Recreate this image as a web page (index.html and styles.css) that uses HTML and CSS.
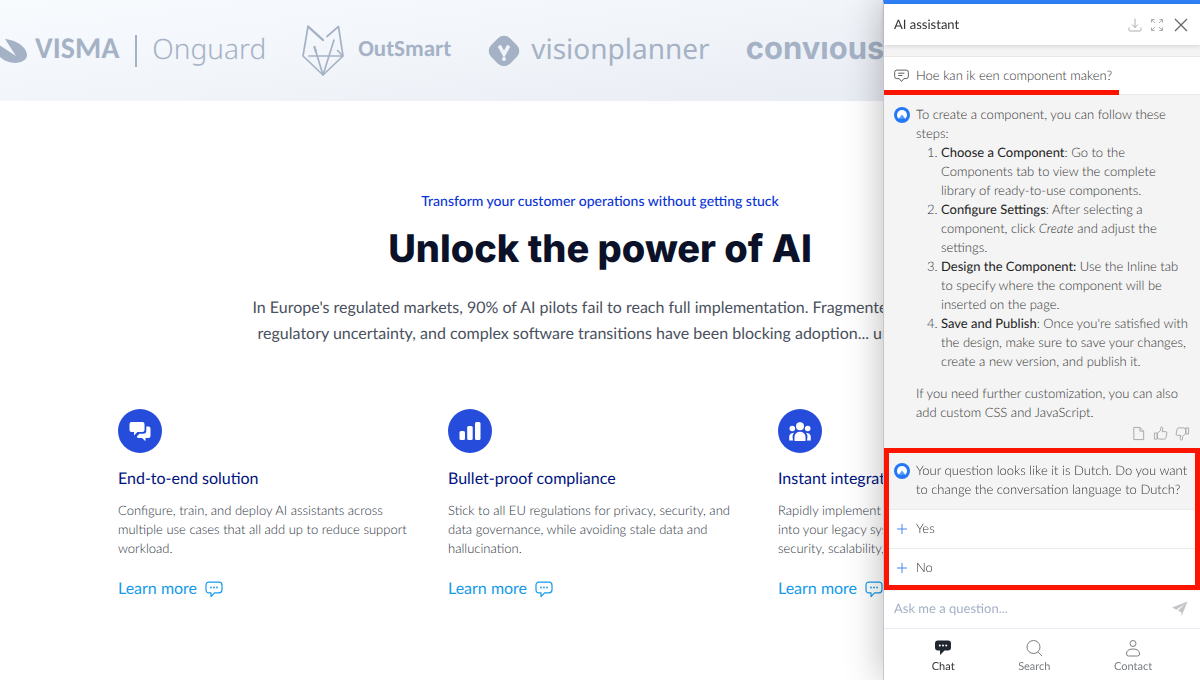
FILE: index.html
```html
<!DOCTYPE html>
<html lang="en">
<head>
<meta charset="utf-8">
<meta name="viewport" content="width=device-width, initial-scale=1">
<title>Unlock the power of AI</title>
<link rel="stylesheet" href="styles.css">
</head>
<body>
<svg class="sprite" aria-hidden="true">
  <symbol id="bubble" viewBox="0 0 18 17">
    <path d="M4 1.200h10q3 0 3 3v4.600q0 3-3 3H9.500L6 15.600v-3.800H4q-3 0-3-3V4.200q0-3 3-3z" fill="none" stroke="currentColor" stroke-width="1.200" stroke-linejoin="round"/>
    <g fill="currentColor"><circle cx="6" cy="6.500" r=".9"/><circle cx="9" cy="6.500" r=".9"/><circle cx="12" cy="6.500" r=".9"/></g>
  </symbol>
  <symbol id="avatar" viewBox="0 0 16 16">
    <circle cx="8" cy="8" r="8" fill="#2478f5"/>
    <circle cx="8" cy="8" r="5" fill="#fff"/>
    <path d="M8 7.500 12 12.500A6 6 0 0 1 4 12.500z" fill="#5b9cf8"/>
    <path d="M3.600 11.800Q5 11 6 11.800t2 0 2 0 2.400 0L11 14.500H5z" fill="#2478f5"/>
  </symbol>
</svg>

<header class="logos">
  <div class="logo logo-visma" role="img" aria-label="Visma Onguard">
    <svg class="swoosh" viewBox="0 0 27 26"><path d="M0 7.500 16 18 5 1C16 2 27 9 27 17c0 6-8 9-16 7.500Q4 23 0 19z" fill="currentColor"/></svg>
    <span class="visma-text">VISMA</span>
    <span class="divider"></span>
    <span class="onguard-text">Onguard</span>
  </div>
  <div class="logo logo-outsmart">
    <svg class="fox" viewBox="0 0 42 52" fill="none" stroke="currentColor" stroke-width="1.700" stroke-linecap="round" stroke-linejoin="round">
      <path d="M21 15 6 1.500 1 31l20 19 20-19L36.500 1.500 25 11.500M7 31h34"/><path d="M12.500 22 21 50 32 15"/><path d="M35.500 25.500 40 30"/><path d="M21 15 6 1.500M12.500 22l1.500 5" stroke-width="2.200"/>
    </svg>
    <span class="outsmart-text">OutSmart</span>
  </div>
  <div class="logo logo-vision">
    <svg class="vp" viewBox="0 0 32 32"><rect x="3.500" y="3.500" width="25" height="25" rx="8" transform="rotate(45 16 16)" fill="currentColor"/><path d="m11.500 11 4.500 8 4.500-8M16 18v1" stroke="#f0f3f9" stroke-width="3.400" fill="none"/><circle cx="16" cy="23.500" r="1.800" fill="#f0f3f9"/></svg>
    <span class="vision-text">visionplanner</span>
  </div>
  <div class="logo"><span class="convious-text" role="img" aria-label="convious">convıous</span></div>
</header>

<main class="page">
  <section class="intro">
    <p class="eyebrow">Transform your customer operations without getting stuck</p>
    <h1>Unlock the power of AI</h1>
    <p class="lead">In Europe's regulated markets, 90% of AI pilots fail to reach full implementation. Fragmented stacks,<br>regulatory uncertainty, and complex software transitions have been blocking adoption... until now.</p>
  </section>
  <section class="features">
    <article class="feature">
      <span class="badge"><svg viewBox="0 0 44 44"><path d="M13.500 13h11q2 0 2 2v6q0 2-2 2h-5l-3.500 3.500V23h-2.500q-2 0-2-2v-6q0-2 2-2z" fill="#fff"/><path d="M28.300 17.500h2.200q2 0 2 2v7.500q0 2-2 2h-3v3.200L24 29h-3.500q-1.500 0-1.700-1.500l2.500-2.700h4q3 0 3-3z" fill="#fff"/></svg></span>
      <h2>End-to-end solution</h2>
      <p>Configure, train, and deploy AI assistants across multiple use cases that all add up to reduce support workload.</p>
      <a class="more" href="#">Learn more <svg><use href="#bubble"/></svg></a>
    </article>
    <article class="feature">
      <span class="badge"><svg viewBox="0 0 44 44" fill="#fff"><rect x="11.500" y="22" width="5.500" height="9" rx="1.500"/><rect x="19.200" y="17" width="5.500" height="14" rx="1.500"/><rect x="27" y="13" width="5.500" height="18" rx="1.500"/></svg></span>
      <h2>Bullet-proof compliance</h2>
      <p>Stick to all EU regulations for privacy, security, and data governance, while avoiding stale data and hallucination.</p>
      <a class="more" href="#">Learn more <svg><use href="#bubble"/></svg></a>
    </article>
    <article class="feature">
      <span class="badge"><svg viewBox="0 0 44 44" fill="#fff"><circle cx="22" cy="17.200" r="4"/><circle cx="14.300" cy="19.500" r="2.800"/><circle cx="29.700" cy="19.500" r="2.800"/><path d="M16.500 32v-4.500a5.500 4.700 0 0 1 11 0V32zM15 31.500h-3.800V28q0-3.800 4.800-4.200-1.500 1.700-1.500 4zM29 31.500h3.800V28q0-3.800-4.800-4.200 1.500 1.700 1.500 4z"/></svg></span>
      <h2>Instant integrations</h2>
      <p>Rapidly implement AI assistants<br>into your legacy systems with<br>security, scalability, and control.</p>
      <a class="more" href="#">Learn more <svg><use href="#bubble"/></svg></a>
    </article>
  </section>
</main>

<aside class="assistant" aria-label="AI assistant">
  <div class="assistant-head">
    <span class="assistant-title">AI assistant</span>
    <button type="button" aria-label="Download"><svg class="i14" viewBox="0 0 14 14"><path d="M7 .5v9M4 6.500l3 3 3-3M1 9.500V12q0 1 1 1h10q1 0 1-1V9.500"/></svg></button>
    <button type="button" aria-label="Expand"><svg class="i14" viewBox="0 0 14 14"><path d="M1.500 4.500v-3h3M1.500 1.500 5 5M9.500 1.500h3v3M12.500 1.500 9 5M1.500 9.500v3h3M1.500 12.500 5 9M9.500 12.500h3v-3M12.500 12.500 9 9"/></svg></button>
    <button type="button" class="close" aria-label="Close"><svg class="i14" viewBox="0 0 14 14"><path d="m1 1 12 12M13 1 1 13"/></svg></button>
  </div>
  <div class="conversation">
    <div class="question">
      <svg class="q-icon" viewBox="0 0 16 14"><path d="M3 .7h10q2.300 0 2.300 2.300v4.500q0 2.300-2.300 2.300h-2.500L8 12.800 5.500 9.800H3Q.7 9.800.7 7.500V3Q.7.7 3 .7zM4.500 4h6.500M4.500 6.500h4.500"/></svg>
      <span>Hoe kan ik een component maken?</span>
      <span class="mark-line"></span>
    </div>
    <div class="message">
      <svg class="avatar"><use href="#avatar"/></svg>
      <div class="message-text">
        <p>To create a component, you can follow these steps:</p>
        <ol>
          <li><strong>Choose a Component</strong>: Go to the Components tab to view the complete library of ready-to-use components.</li>
          <li><strong>Configure Settings</strong>: After selecting a component, click <em>Create</em> and adjust the settings.</li>
          <li><strong>Design the Component:</strong> Use the Inline tab to specify where the component will be inserted on the page.</li>
          <li><strong>Save and Publish</strong>: Once you're satisfied with the design, make sure to save your changes, create a new version, and publish it.</li>
        </ol>
        <p class="after-list">If you need further customization, you can also add custom CSS and JavaScript.</p>
      </div>
    </div>
    <div class="feedback">
      <button type="button" aria-label="Copy"><svg viewBox="0 0 16 16"><path d="M3 1.500h6.500L13.500 5.500v9H3zM9.500 1.500v4h4"/></svg></button>
      <button type="button" aria-label="Helpful"><svg viewBox="0 0 16 16"><path d="M1.500 7.500h3v6.500h-3zM4.500 8 8 4.800V2.500Q8 1 9.200 1q1.300 0 1.300 2l-.7 3h3.700q1.500 0 1.300 1.500l-1 5q-.3 1.500-1.800 1.500H7L4.500 13z"/></svg></button>
      <button type="button" aria-label="Not helpful"><svg viewBox="0 0 16 16"><path d="M14.500 8.500h-3V2h3zM11.500 8 8 11.200v2.300Q8 15 6.800 15q-1.300 0-1.300-2l.7-3H2.500Q1 10 1.200 8.500l1-5Q2.500 2 4 2h5l2.500 1z"/></svg></button>
    </div>
    <div class="language">
      <div class="message">
        <svg class="avatar"><use href="#avatar"/></svg>
        <p class="message-text">Your question looks like it is Dutch. Do you want to change the conversation language to Dutch?</p>
      </div>
      <button type="button" class="option"><svg viewBox="0 0 12 12"><path d="M6 1v10M1 6h10"/></svg>Yes</button>
      <button type="button" class="option"><svg viewBox="0 0 12 12"><path d="M6 1v10M1 6h10"/></svg>No</button>
      <span class="mark-box"></span>
    </div>
  </div>
  <form class="ask">
    <input type="text" placeholder="Ask me a question..." aria-label="Ask me a question">
    <button type="button" aria-label="Send"><svg viewBox="0 0 16 16"><path d="M15.500.5 0 6.500l4.500 2.300 8-5.800L6 9.700l3.500 1.800V15.500z" fill="#c4c7ca"/></svg></button>
  </form>
  <nav class="tabs">
    <button type="button" class="tab active"><svg viewBox="0 0 18 18"><path d="M4 1.500h10q3 0 3 3v4q0 3-3 3h-3.500L6 16v-4.500H4q-3 0-3-3v-4q0-3 3-3z" fill="#20272e"/><g fill="#fff"><circle cx="5.800" cy="6.500" r="1"/><circle cx="9" cy="6.500" r="1"/><circle cx="12.200" cy="6.500" r="1"/></g></svg>Chat</button>
    <button type="button" class="tab"><svg viewBox="0 0 18 18"><circle cx="8.500" cy="8" r="6.500"/><path d="m13 13 4 4"/></svg>Search</button>
    <button type="button" class="tab"><svg viewBox="0 0 18 18"><circle cx="9" cy="4.500" r="3"/><path d="M4.500 17h9q2 0 2-2 0-5-6.500-5T2.500 15q0 2 2 2z"/></svg>Contact</button>
  </nav>
</aside>
</body>
</html>
```
FILE: styles.css
```css
* { box-sizing: border-box; }

body {
  margin: 0;
  min-height: 100vh;
  background: #fff;
  font-family: Lato, Carlito, sans-serif;
  text-rendering: geometricPrecision;
  color: #4a5160;
  overflow: hidden;
}

h1, h2, p, ol { margin: 0; }

button {
  border: 0;
  padding: 0;
  background: none;
  font: inherit;
  color: inherit;
  text-rendering: inherit;
  cursor: pointer;
}

svg { display: block; flex: none; }

.sprite { position: absolute; width: 0; height: 0; }

/* Customer logos */
.logos {
  display: flex;
  align-items: center;
  gap: 36px;
  height: 101px;
  overflow: hidden;
  background: linear-gradient(173deg, #f8fbfe, #f1f4f9 45%, #e5e9f1);
  color: #a5b2c6;
  white-space: nowrap;
}

.logo { display: flex; align-items: center; flex: none; }
.logo span { padding-bottom: 4px; }
.logo-visma { gap: 8px; }
.logo-outsmart { gap: 14px; }
.logo-vision { gap: 10px; }
.swoosh { width: 27px; height: 26px; }
.fox { width: 42px; height: 52px; }
.vp { width: 34px; height: 34px; }
.divider { width: 2px; height: 32px; margin: 0 7px 0 8px; background: currentColor; }
.visma-text { font: bold 30px/40px Carlito, "Liberation Sans", sans-serif; }
.onguard-text { font: 300 28px/40px "Noto Sans", sans-serif; }
.outsmart-text { font: bold 23px/40px Carlito, Lato, sans-serif; }
.vision-text { font: 400 28px/40px "Noto Sans", sans-serif; }
.convious-text { font: 700 31px/40px Inter, sans-serif; }

/* Page copy */
.page { padding: 88px 16px 0; }

.intro { text-align: center; }

.eyebrow { font-size: 14px; font-weight: 500; line-height: 24px; color: #0a35d6; }

h1 {
  margin-top: 12px;
  font: 800 38px/48px Inter, sans-serif;
  color: #0a1128;
}

.lead { margin-top: 22px; font-size: 16px; line-height: 26px; white-space: nowrap; }

.features {
  display: grid;
  grid-template-columns: repeat(3, 1fr);
  gap: 26px;
  max-width: 964px;
  margin: 62px auto 0;
}

.badge { display: block; width: 44px; height: 44px; border-radius: 50%; background: #264cdb; }

.feature h2 { margin-top: 16px; font-size: 16px; line-height: 20px; font-weight: 400; color: #00137f; }
.feature p { margin-top: 12px; font-size: 13px; font-weight: 300; line-height: 19px; color: #2c3240; }

.more {
  display: flex;
  align-items: center;
  gap: 8px;
  margin-top: 21px;
  font-size: 16px;
  line-height: 20px;
  color: #159aea;
  text-decoration: none;
}
.more svg { width: 18px; height: 17px; }

/* Chat widget floating over the page */
.assistant {
  position: fixed;
  top: 0;
  right: 0;
  bottom: 0;
  display: flex;
  flex-direction: column;
  width: 317px;
  border-left: 1px solid #c4c6ca;
  border-top: 4px solid #2f7ff7;
  background: #fff;
  box-shadow: 0 0 36px rgba(0, 0, 0, .28);
  font-size: 13px;
  font-weight: 300;
  line-height: 19px;
  color: #333;
}

.assistant-head {
  display: flex;
  align-items: center;
  gap: 8px;
  padding: 11px 12px 11px 10px;
  z-index: 1;
  box-shadow: 0 1px 5px rgba(0, 0, 0, .14);
}
.assistant-title { flex: 1; font-weight: 400; color: #333; }
.i14 { width: 14px; height: 14px; fill: none; stroke: #aaadb0; }
.close { margin-left: 2px; }
.close .i14 { stroke: #666; stroke-width: 1.3; }

.conversation { flex: 1; padding-top: 11px; background: #f4f4f4; }

.question {
  position: relative;
  display: flex;
  align-items: center;
  gap: 7px;
  padding: 9px 10px;
  border-top: 1px solid #e8e8e8;
  border-bottom: 1px solid #e8e8e8;
  background: #fff;
}
.q-icon { width: 15px; height: 14px; fill: none; stroke: #555; }

/* Red highlights drawn over the conversation */
.mark-line { position: absolute; left: 0; bottom: -1px; width: 235px; height: 5px; background: #fb1500; }
.mark-box { position: absolute; inset: 0; border: 5px solid #fb1500; pointer-events: none; }

.message { display: flex; gap: 6px; padding: 10px 10px 0; }
.avatar { width: 16px; height: 16px; margin-top: 2px; }
.message-text { flex: 1; }
.message ol { padding-left: 25px; }
.message strong { font-weight: 400; color: #222; }
.after-list { margin-top: 13px; }

.feedback { display: flex; justify-content: flex-end; gap: 7px; padding: 4px 10px 7px; }
.feedback svg { width: 15px; height: 15px; fill: none; stroke: #a3a6a9; }

.language { position: relative; padding-bottom: 3px; background: #fff; }
.language .message { padding: 13px 10px 10px; background: #f4f4f4; }

.option {
  display: flex;
  align-items: center;
  gap: 8px;
  width: 100%;
  padding: 9px 12px 10px;
  border-top: 1px solid #e8eaec;
  text-align: left;
}
.option svg { width: 12px; height: 12px; stroke: #4a86f0; }

.ask { display: flex; align-items: center; padding: 8px 12px 10px 10px; border-bottom: 1px solid #e8edf3; }
.ask input { flex: 1; min-width: 0; height: 19px; border: 0; padding: 0; outline: 0; font: inherit; font-weight: 400; text-rendering: inherit; background: none; }
.ask input::placeholder { color: #a3b1c4; opacity: 1; }
.ask svg { width: 16px; height: 16px; }

.tabs { display: flex; justify-content: space-around; padding: 10px 16px 4px; }
.tab { display: flex; flex-direction: column; align-items: center; font-size: 11px; font-weight: 400; line-height: 19px; color: #7a7d80; }
.tab svg { width: 18px; height: 18px; fill: none; stroke: #7a7d80; }
.tab.active { color: #333; }
.tab.active svg { stroke: none; }
```
